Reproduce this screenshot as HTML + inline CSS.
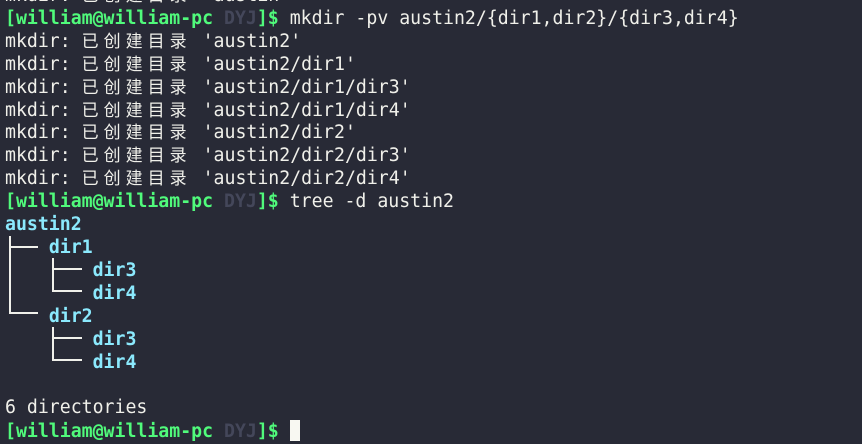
<!DOCTYPE html>
<html><head><meta charset="utf-8"><style>
html,body{margin:0;padding:0;background:#282a36;width:862px;height:444px;overflow:hidden}
pre{margin:0;position:absolute;left:5px;top:-15px;font-family:"DejaVu Sans Mono","Liberation Mono",monospace;font-size:18.2px;line-height:22.9px;color:#f0f0ea}
.g{color:#50fa7b;font-weight:bold}
.d{color:#44475a;font-weight:bold}
.c{color:#8be9fd;font-weight:bold}
.k{display:inline-block;width:22px;font-family:"Noto Sans CJK SC","WenQuanYi Zen Hei",sans-serif;font-size:17px;line-height:1}
.cur{display:inline-block;width:10px;height:21px;background:#f8f8f2;vertical-align:-4px}
.l{position:absolute;background:#f0f0ea}
</style></head><body>
<pre>mkdir: <span class="k">已</span><span class="k">创</span><span class="k">建</span><span class="k">目</span><span class="k">录</span> 'austin'
<span class="g">[william@william-pc <span class="d">DYJ</span>]$</span> mkdir -pv austin2/{dir1,dir2}/{dir3,dir4}
mkdir: <span class="k">已</span><span class="k">创</span><span class="k">建</span><span class="k">目</span><span class="k">录</span> 'austin2'
mkdir: <span class="k">已</span><span class="k">创</span><span class="k">建</span><span class="k">目</span><span class="k">录</span> 'austin2/dir1'
mkdir: <span class="k">已</span><span class="k">创</span><span class="k">建</span><span class="k">目</span><span class="k">录</span> 'austin2/dir1/dir3'
mkdir: <span class="k">已</span><span class="k">创</span><span class="k">建</span><span class="k">目</span><span class="k">录</span> 'austin2/dir1/dir4'
mkdir: <span class="k">已</span><span class="k">创</span><span class="k">建</span><span class="k">目</span><span class="k">录</span> 'austin2/dir2'
mkdir: <span class="k">已</span><span class="k">创</span><span class="k">建</span><span class="k">目</span><span class="k">录</span> 'austin2/dir2/dir3'
mkdir: <span class="k">已</span><span class="k">创</span><span class="k">建</span><span class="k">目</span><span class="k">录</span> 'austin2/dir2/dir4'
<span class="g">[william@william-pc <span class="d">DYJ</span>]$</span> tree -d austin2
<span class="c">austin2</span>
    <span class="c">dir1</span>
        <span class="c">dir3</span>
        <span class="c">dir4</span>
    <span class="c">dir2</span>
        <span class="c">dir3</span>
        <span class="c">dir4</span>

6 directories
<span class="g">[william@william-pc <span class="d">DYJ</span>]$</span> <span class="cur"></span></pre>
<div class="l" style="left:9px;top:236px;width:2px;height:78px"></div>
<div class="l" style="left:9px;top:246px;width:29px;height:2px"></div>
<div class="l" style="left:9px;top:312px;width:29px;height:2px"></div>
<div class="l" style="left:52px;top:258px;width:2px;height:34px"></div>
<div class="l" style="left:52px;top:268px;width:30px;height:2px"></div>
<div class="l" style="left:52px;top:290px;width:30px;height:2px"></div>
<div class="l" style="left:52px;top:327px;width:2px;height:34px"></div>
<div class="l" style="left:52px;top:337px;width:30px;height:2px"></div>
<div class="l" style="left:52px;top:359px;width:30px;height:2px"></div>
</body></html>
